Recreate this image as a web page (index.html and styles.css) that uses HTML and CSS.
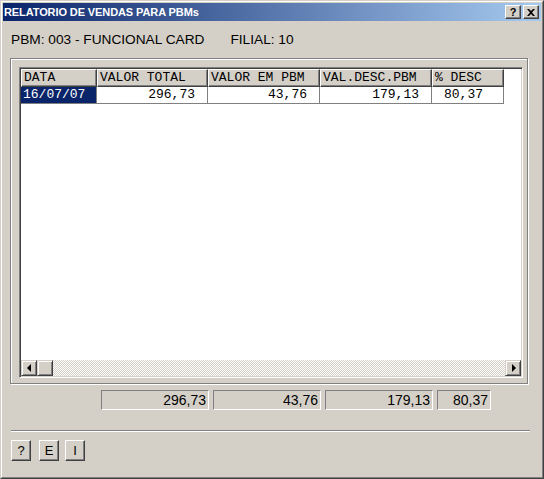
FILE: index.html
```html
<!DOCTYPE html>
<html>
<head>
<meta charset="utf-8">
<link rel="stylesheet" href="styles.css">
</head>
<body>
<div class="window">
  <div class="frame">
    <div class="titlebar">
      <div class="title">RELATORIO DE VENDAS PARA PBMs</div>
      <div class="tbtn tbtn-help">?</div>
      <div class="tbtn tbtn-close">
        <svg width="8" height="7" viewBox="0 0 8 7"><path d="M0 0h2l2 2 2-2h2L5 3.5 8 7H6L4 5 2 7H0l3-3.5z" fill="#000"/></svg>
      </div>
    </div>
    <div class="content">
      <div class="info"><span>PBM: 003 - FUNCIONAL CARD</span><span class="filial">FILIAL: 10</span></div>
      <div class="group">
        <div class="grid">
          <div class="grid-inner">
            <div class="hrow">
              <div class="hcell c1">DATA</div>
              <div class="hcell c2">VALOR TOTAL</div>
              <div class="hcell c3">VALOR EM PBM</div>
              <div class="hcell c4">VAL.DESC.PBM</div>
              <div class="hcell c5">% DESC</div>
            </div>
            <div class="drow">
              <div class="dcell c1 sel">16/07/07</div>
              <div class="dcell c2 num">296,73</div>
              <div class="dcell c3 num">43,76</div>
              <div class="dcell c4 num">179,13</div>
              <div class="dcell c5 num pct">80,37</div>
            </div>
            <div class="spacer"></div>
            <div class="hscroll">
              <div class="sbtn"><span class="arrow-left"></span></div>
              <div class="sbtn thumb"></div>
              <div class="track"></div>
              <div class="sbtn"><span class="arrow-right"></span></div>
            </div>
          </div>
        </div>
      </div>
      <div class="totals">
        <div class="tbox w1">296,73</div>
        <div class="tbox w1">43,76</div>
        <div class="tbox w1">179,13</div>
        <div class="tbox w2">80,37</div>
      </div>
      <div class="sep"></div>
      <div class="buttons">
        <div class="btn b1">?</div>
        <div class="btn b2">E</div>
        <div class="btn b3">I</div>
      </div>
    </div>
  </div>
</div>
</body>
</html>
```
FILE: styles.css
```css
html, body {
  margin: 0;
  padding: 0;
  background: #d4d0c8;
}
.window {
  width: 544px;
  height: 479px;
  box-sizing: border-box;
  border: 1px solid;
  border-color: #d4d0c8 #404040 #404040 #d4d0c8;
  font-family: "Liberation Sans", Arial, sans-serif;
}
.frame {
  height: 100%;
  box-sizing: border-box;
  border: 1px solid;
  border-color: #fff #808080 #808080 #fff;
  padding: 1px;
  display: flex;
  flex-direction: column;
}
.titlebar {
  height: 18px;
  display: flex;
  align-items: center;
  padding: 0 2px 0 1px;
  background: linear-gradient(to right, #0a246a, #a6caf0);
}
.title {
  flex: 1;
  color: #fff;
  font-weight: bold;
  font-size: 11px;
  letter-spacing: -0.1px;
}
.tbtn {
  width: 16px;
  height: 14px;
  box-sizing: border-box;
  background: #d4d0c8;
  border: 1px solid;
  border-color: #fff #404040 #404040 #fff;
  box-shadow: inset -1px -1px #808080;
  display: flex;
  align-items: center;
  justify-content: center;
  font-weight: bold;
  font-size: 11px;
  color: #000;
}
.tbtn-close {
  margin-left: 2px;
}
.content {
  flex: 1;
  padding: 0 0 0 7px;
  display: flex;
  flex-direction: column;
}
.info {
  margin-top: 11px;
  height: 16px;
  line-height: 16px;
  font-size: 13.7px;
  padding-left: 1px;
  color: #000;
  white-space: pre;
}
.filial {
  margin-left: 26px;
}
.group {
  margin-top: 10px;
  width: 518px;
  box-sizing: border-box;
  border: 1px solid #808080;
  box-shadow: inset 1px 1px #fff, 1px 1px #fff;
  padding: 8px 4px 5px 8px;
}
.grid {
  width: 504px;
  height: 311px;
  box-sizing: border-box;
  border: 1px solid;
  border-color: #808080 #fff #fff #808080;
  box-shadow: inset 1px 1px #404040, inset -1px -1px #d4d0c8;
  padding: 1px;
}
.grid-inner {
  height: 100%;
  background: #fff;
  display: flex;
  flex-direction: column;
  font-family: "Liberation Mono", "Courier New", monospace;
  font-size: 13px;
}
.hrow, .drow {
  display: flex;
}
.c1 { width: 76px; }
.c2 { width: 111px; }
.c3 { width: 112px; }
.c4 { width: 112px; }
.c5 { width: 72px; }
.hcell {
  height: 18px;
  box-sizing: border-box;
  background: #d4d0c8;
  border: 1px solid;
  border-color: #fff #404040 #404040 #fff;
  box-shadow: inset -1px -1px #808080;
  padding-left: 2px;
  line-height: 15px;
  color: #000;
  white-space: pre;
}
.dcell {
  height: 17px;
  box-sizing: border-box;
  border-right: 1px solid #808080;
  border-bottom: 1px solid #808080;
  line-height: 16px;
  padding-left: 2px;
  color: #000;
  white-space: pre;
}
.dcell.num {
  text-align: right;
  padding-right: 12px;
}
.dcell.pct {
  padding-right: 20px;
}
.dcell.sel {
  background: #0a246a;
  color: #fff;
}
.spacer {
  flex: 1;
}
.hscroll {
  height: 16px;
  display: flex;
}
.sbtn {
  width: 16px;
  height: 16px;
  box-sizing: border-box;
  background: #d4d0c8;
  border: 1px solid;
  border-color: #d4d0c8 #404040 #404040 #d4d0c8;
  box-shadow: inset 1px 1px #fff, inset -1px -1px #808080;
  display: flex;
  align-items: center;
  justify-content: center;
}
.track {
  flex: 1;
  background: repeating-conic-gradient(#fff 0 25%, #d4d0c8 0 50%) 0 0 / 2px 2px;
}
.arrow-left {
  width: 0;
  height: 0;
  border-top: 4px solid transparent;
  border-bottom: 4px solid transparent;
  border-right: 4px solid #000;
  margin-left: -1px;
}
.arrow-right {
  width: 0;
  height: 0;
  border-top: 4px solid transparent;
  border-bottom: 4px solid transparent;
  border-left: 4px solid #000;
  margin-left: 1px;
}
.totals {
  margin-top: 6px;
  margin-left: 91px;
  display: flex;
  gap: 4px;
}
.tbox {
  height: 20px;
  box-sizing: border-box;
  border: 1px solid;
  border-color: #808080 #fff #fff #808080;
  font-size: 14px;
  line-height: 18px;
  text-align: right;
  padding-right: 2px;
  color: #000;
}
.w1 { width: 108px; }
.w2 { width: 54px; }
.sep {
  margin-top: 20px;
  margin-left: 1px;
  width: 519px;
  border-top: 1px solid #808080;
  border-bottom: 1px solid #fff;
}
.buttons {
  margin-top: 8px;
  display: flex;
}
.btn {
  width: 20px;
  height: 21px;
  box-sizing: border-box;
  background: #d4d0c8;
  border: 1px solid;
  border-color: #fff #404040 #404040 #fff;
  box-shadow: inset -1px -1px #808080;
  font-size: 13px;
  display: flex;
  align-items: center;
  justify-content: center;
  color: #000;
}
.b1 { margin-left: 1px; }
.b2 { margin-left: 8px; }
.b3 { margin-left: 6px; }
```
